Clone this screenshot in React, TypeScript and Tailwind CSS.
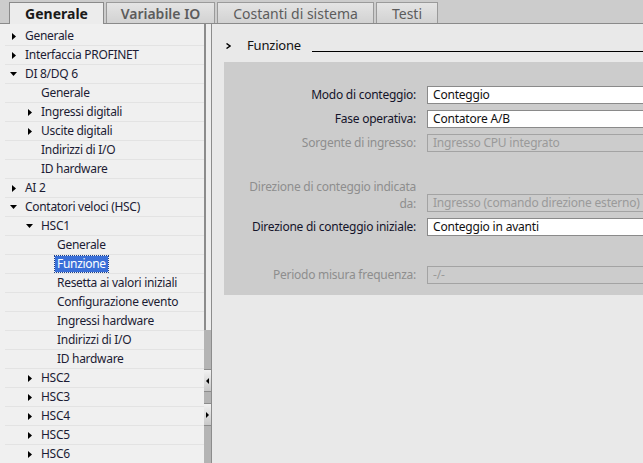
import React from "react";

type Item = { label: string; level: number; arrow?: "right" | "down"; selected?: boolean };

const items: Item[] = [
  { label: "Generale", level: 0, arrow: "right" },
  { label: "Interfaccia PROFINET", level: 0, arrow: "right" },
  { label: "DI 8/DQ 6", level: 0, arrow: "down" },
  { label: "Generale", level: 1 },
  { label: "Ingressi digitali", level: 1, arrow: "right" },
  { label: "Uscite digitali", level: 1, arrow: "right" },
  { label: "Indirizzi di I/O", level: 1 },
  { label: "ID hardware", level: 1 },
  { label: "AI 2", level: 0, arrow: "right" },
  { label: "Contatori veloci (HSC)", level: 0, arrow: "down" },
  { label: "HSC1", level: 1, arrow: "down" },
  { label: "Generale", level: 2 },
  { label: "Funzione", level: 2, selected: true },
  { label: "Resetta ai valori iniziali", level: 2 },
  { label: "Configurazione evento", level: 2 },
  { label: "Ingressi hardware", level: 2 },
  { label: "Indirizzi di I/O", level: 2 },
  { label: "ID hardware", level: 2 },
  { label: "HSC2", level: 1, arrow: "right" },
  { label: "HSC3", level: 1, arrow: "right" },
  { label: "HSC4", level: 1, arrow: "right" },
  { label: "HSC5", level: 1, arrow: "right" },
  { label: "HSC6", level: 1, arrow: "right" },
];

function Arrow({ dir }: { dir?: "right" | "down" }) {
  if (!dir) return <span className="w-[9px]" />;
  return (
    <span className="w-[9px] flex items-center justify-center">
      {dir === "right" ? (
        <svg width="4" height="7" viewBox="0 0 4 7">
          <path d="M0 0 L4 3.5 L0 7 Z" fill="#000" />
        </svg>
      ) : (
        <svg width="7" height="4" viewBox="0 0 7 4">
          <path d="M0 0 L7 0 L3.5 4 Z" fill="#000" />
        </svg>
      )}
    </span>
  );
}

function TreeRow({ item }: { item: Item }) {
  const pad = ["pl-[4px]", "pl-[20px]", "pl-[36px]"][item.level];
  return (
    <div className="h-[19px] pl-[5px]">
      <div className="h-[19px] border-b border-[#e3e3e3] flex items-center">
        <div className={`flex items-center ${pad}`}>
          <Arrow dir={item.arrow} />
          <span className="w-[7px]" />
          {item.selected ? (
            <span className="bg-[#3a6fd8] text-white px-[2px] -ml-[2px] leading-[16px] outline outline-1 outline-dotted outline-[#1b3f8a]">
              {item.label}
            </span>
          ) : (
            <span className="text-[#1c1c34]">{item.label}</span>
          )}
        </div>
      </div>
    </div>
  );
}

function Tab({ label, active, w, semi }: { label: string; active?: boolean; w: string; semi?: boolean }) {
  if (active) {
    return (
      <div
        className={`${w} h-[22px] -mb-px bg-[#ececec] border border-b-0 border-[#8a8a8a] flex items-center justify-center text-[14px] font-bold text-[#1a1a1a]`}
      >
        {label}
      </div>
    );
  }
  return (
    <div
      className={`${w} h-[21px] bg-gradient-to-b from-[#e4e4e4] to-[#d2d2d2] border border-b-0 border-[#9a9a9a] flex items-center justify-center text-[14px] ${semi ? "font-semibold" : "font-normal"} text-[#5c5c5c]`}
    >
      {label}
    </div>
  );
}

function Field({
  label,
  value,
  disabled,
  twoLine,
}: {
  label: React.ReactNode;
  value: string;
  disabled?: boolean;
  twoLine?: boolean;
}) {
  return (
    <div className={`flex ${twoLine ? "items-end" : "items-center"}`}>
      <div
        className={`w-[194px] text-right pr-[2px] shrink-0 tracking-[-0.25px] ${twoLine ? "leading-[17px]" : "leading-[18px]"} ${
          disabled ? "text-[#8e8e8e]" : "text-[#14142a]"
        }`}
      >
        {label}
      </div>
      <div
        className={`ml-[9px] w-[260px] h-[18px] shrink-0 flex items-center pl-[5px] border whitespace-nowrap overflow-hidden tracking-[-0.2px] ${
          disabled ? "border-[#a3a3a3] text-[#9a9a9a] bg-transparent" : "border-[#8a8a8a] bg-white text-[#111]"
        }`}
      >
        {value}
      </div>
    </div>
  );
}

export default function App() {
  return (
    <div
      className="w-[643px] h-[463px] overflow-hidden bg-[#cccccc] flex flex-col text-[12px]"
      style={{ fontFamily: '"Noto Sans", "Open Sans", sans-serif' }}
    >
      {/* Tab bar */}
      <div className="h-[24px] shrink-0 flex items-end gap-[2px] pl-[9px] border-b border-[#8a8a8a] relative z-10">
        <Tab label="Generale" active w="w-[95px]" />
        <Tab label="Variabile IO" w="w-[109px]" semi />
        <Tab label="Costanti di sistema" w="w-[157px]" />
        <Tab label="Testi" w="w-[62px]" />
      </div>

      {/* Body */}
      <div className="flex flex-1 min-h-0">
        {/* Tree */}
        <div className="w-[204px] shrink-0 bg-[#f0f0f0] pt-[3px] overflow-hidden tracking-[-0.3px]">
          {items.map((it, i) => (
            <TreeRow key={i} item={it} />
          ))}
        </div>

        {/* Scrollbar / splitter */}
        <div className="w-[8px] shrink-0 flex flex-col bg-[#b4b4b4] border-r border-[#8c8c8c]">
          <div className="h-[306px] bg-[#eeeeee] border-l-2 border-[#8c8c8c]" />
          <div className="h-[39px]" />
          <div className="h-[23px] bg-gradient-to-b from-[#f2f2f2] to-[#c8c8c8] border-y border-[#8c8c8c] flex items-center justify-center">
            <svg width="3" height="6" viewBox="0 0 3 6">
              <path d="M3 0 L0 3 L3 6 Z" fill="#000" />
            </svg>
          </div>
          <div className="h-[11px]" />
          <div className="h-[23px] bg-gradient-to-b from-[#f2f2f2] to-[#c8c8c8] border-y border-[#8c8c8c] flex items-center justify-center">
            <svg width="3" height="6" viewBox="0 0 3 6">
              <path d="M0 0 L3 3 L0 6 Z" fill="#000" />
            </svg>
          </div>
        </div>

        {/* Right panel */}
        <div className="flex-1 min-w-0 bg-[#e9e9e9] overflow-hidden">
          <div className="flex items-center h-[18px] mt-[13px] ml-[14px]">
            <svg width="5" height="6" viewBox="0 0 5 6" className="shrink-0">
              <path d="M0.5 0.5 L4 3 L0.5 5.5" fill="none" stroke="#000" strokeWidth="1.4" />
            </svg>
            <span className="ml-[16px] text-[13px] text-[#111] tracking-[-0.2px]">Funzione</span>
            <div className="flex-1 h-px bg-black self-end mb-[3px] ml-[11px]" />
          </div>

          <div className="mt-[7px] ml-[12px] h-[233px] bg-[#cccccc] pt-[24px] flex flex-col">
            <Field label="Modo di conteggio:" value="Conteggio" />
            <div className="mt-[6px]">
              <Field label="Fase operativa:" value="Contatore A/B" />
            </div>
            <div className="mt-[6px]">
              <Field label="Sorgente di ingresso:" value="Ingresso CPU integrato" disabled />
            </div>
            <div className="mt-[26px]">
              <Field
                label={
                  <>
                    Direzione di conteggio indicata
                    <br />
                    da:
                  </>
                }
                value="Ingresso (comando direzione esterno)"
                disabled
                twoLine
              />
            </div>
            <div className="mt-[6px]">
              <Field label="Direzione di conteggio iniziale:" value="Conteggio in avanti" />
            </div>
            <div className="mt-[30px]">
              <Field label="Periodo misura frequenza:" value="-/-" disabled />
            </div>
          </div>
        </div>
      </div>
    </div>
  );
}
